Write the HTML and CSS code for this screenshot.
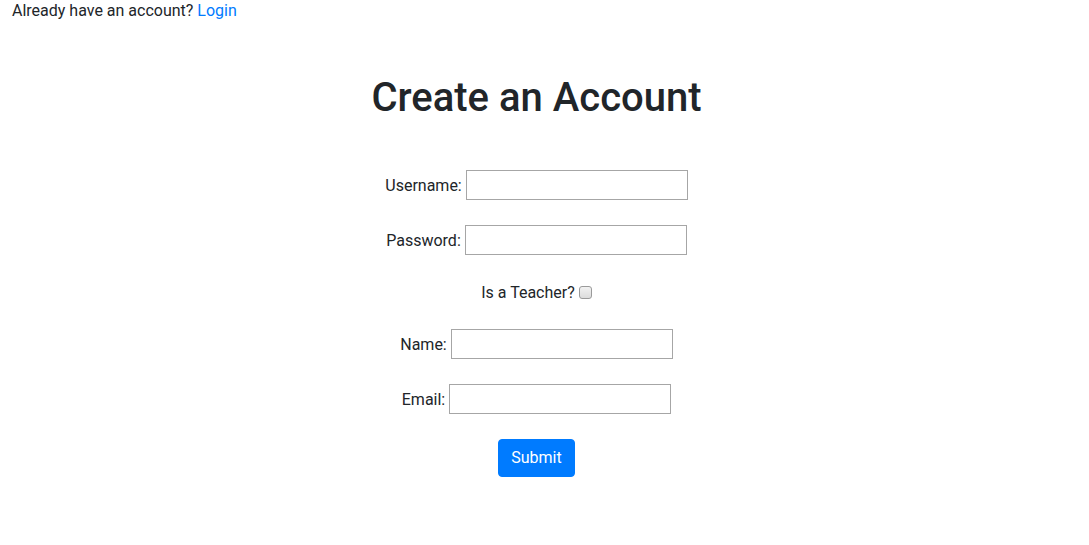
FILE: index.html
```html
<!DOCTYPE html>
<html lang="en">
<head>
<meta charset="utf-8">
<title>Create an Account</title>
<link rel="stylesheet" href="styles.css">
</head>
<body>
<div class="page">
  <div class="topbar">Already have an account? <a href="#" class="link">Login</a></div>
  <h1 class="title">Create an Account</h1>
  <form class="form">
    <div class="row"><label class="label">Username:</label> <input type="text" class="field"></div>
    <div class="row"><label class="label">Password:</label> <input type="password" class="field"></div>
    <div class="row row-check"><label class="label">Is a Teacher?</label> <input type="checkbox" class="check"></div>
    <div class="row"><label class="label">Name:</label> <input type="text" class="field"></div>
    <div class="row"><label class="label">Email:</label> <input type="email" class="field"></div>
    <div class="row row-btn"><button type="button" class="btn">Submit</button></div>
  </form>
</div>
</body>
</html>
```
FILE: styles.css
```css
html, body {
  margin: 0;
  padding: 0;
  background: #fff;
}
body {
  font-family: Roboto, "Liberation Sans", sans-serif;
  font-size: 16px;
  line-height: 1.5;
  color: #212529;
}
.page {
  padding-right: 16px;
}
.topbar {
  padding-left: 12px;
  line-height: 22px;
}
.link {
  color: #007bff;
  text-decoration: none;
}
.title {
  margin: 52px 0 0;
  text-align: center;
  font-size: 40px;
  font-weight: 500;
  line-height: 1.2;
}
.form {
  margin-top: 48px;
  display: flex;
  flex-direction: column;
  align-items: center;
  gap: 25px;
}
.row {
  display: flex;
  align-items: center;
  gap: 4px;
  height: 30px;
}
.label {
  padding-top: 1px;
}
.row-check {
  height: 24px;
}
.row-btn {
  height: 38px;
}
.field {
  box-sizing: border-box;
  width: 222px;
  height: 30px;
  border: 1px solid #a6a6a6;
  padding: 1px 2px;
  font: inherit;
  margin: 0;
}
.check {
  appearance: none;
  -webkit-appearance: none;
  box-sizing: border-box;
  width: 13px;
  height: 13px;
  margin: 1px 0 0;
  border: 1px solid #9a9a9a;
  border-radius: 3px;
  background: linear-gradient(#f2f2f2, #dcdcdc);
}
.btn {
  font: inherit;
  line-height: 1.5;
  color: #fff;
  background: #007bff;
  border: 1px solid #007bff;
  border-radius: 4px;
  padding: 6px 12px;
  cursor: pointer;
}
```
